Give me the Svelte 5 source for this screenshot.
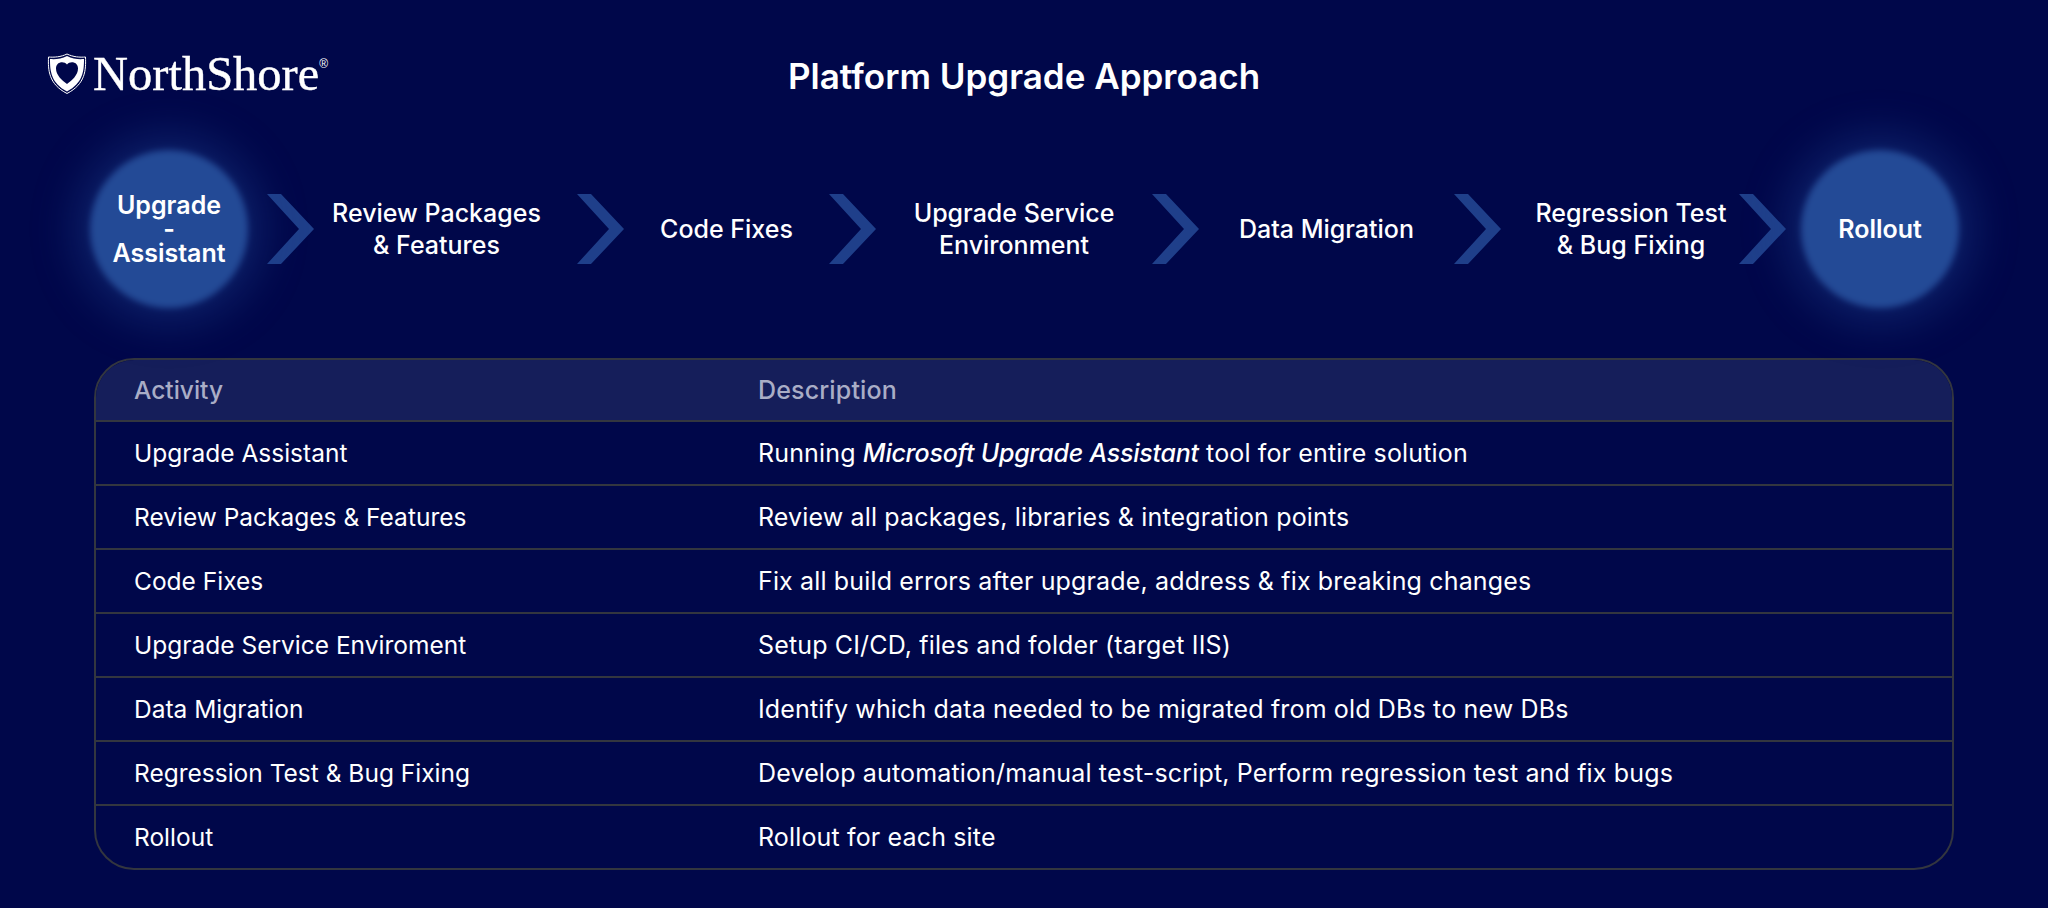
<script lang="ts">
  // width = room between the two chevrons, inset = space kept on the right of the text
  const steps = [
    { lines: ['Review Packages', '& Features'], width: 263, inset: 18, lead: 0 },
    { lines: ['Code Fixes'], width: 205, inset: 0, lead: 0 },
    { lines: ['Upgrade Service', 'Environment'], width: 276, inset: 0, lead: 0 },
    { lines: ['Data Migration'], width: 255, inset: 0, lead: 0 },
    { lines: ['Regression Test', '& Bug Fixing'], width: 238, inset: 0, lead: 22 }
  ];

  const rows = [
    { activity: 'Upgrade Assistant', before: 'Running ', em: 'Microsoft Upgrade Assistant', after: ' tool for entire solution' },
    { activity: 'Review Packages & Features', before: 'Review all packages, libraries & integration points' },
    { activity: 'Code Fixes', before: 'Fix all build errors after upgrade, address & fix breaking changes' },
    { activity: 'Upgrade Service Enviroment', before: 'Setup CI/CD, files and folder (target IIS)' },
    { activity: 'Data Migration', before: 'Identify which data needed to be migrated from old DBs to new DBs' },
    { activity: 'Regression Test & Bug Fixing', before: 'Develop automation/manual test-script, Perform regression test and fix bugs' },
    { activity: 'Rollout', before: 'Rollout for each site' }
  ];
</script>

{#snippet chevron()}
  <svg class="chevron" viewBox="0 0 47 70" aria-hidden="true">
    <path d="M0 0H14L47 35L14 70H0L32 35Z" />
  </svg>
{/snippet}

<div class="page">
  <header class="top">
    <div class="logo">
      <svg class="shield" viewBox="0 0 40 42" aria-hidden="true">
        <path class="shield-edge" d="M20 1C14 4 7 4.500 1.500 4C1 17 1.500 31 20 40.500C38.500 31 39 17 38.500 4C33 4.500 26 4 20 1Z" />
        <path fill-rule="evenodd" class="shield-fill" d="M20 3C14.500 6 8 6.500 3 6C3 18 4 30 20 38.500C36 30 37 18 37 6C32 6.500 25.500 6 20 3ZM20 11.500C23 7.500 31 8.500 31 15.500C31 22 25 27.500 20 31C15 27.500 9 22 9 15.500C9 8.500 17 7.500 20 11.500Z" />
      </svg>
      <span class="wordmark">NorthShore<sup>®</sup></span>
    </div>
    <h1>Platform Upgrade Approach</h1>
  </header>

  <section class="flow">
    <div class="circle"><span>Upgrade</span><span>-</span><span>Assistant</span></div>
    {@render chevron()}
    {#each steps as step}
      <div class="step" style="width: {step.width}px; padding: 0 {step.inset}px 0 {step.lead}px">
        {#each step.lines as line}<span>{line}</span>{/each}
      </div>
      {@render chevron()}
    {/each}
    <div class="circle end"><span>Rollout</span></div>
  </section>

  <section class="table">
    <div class="row head">
      <div class="col-a">Activity</div>
      <div class="col-b">Description</div>
    </div>
    {#each rows as row}
      <div class="row">
        <div class="col-a">{row.activity}</div>
        <div class="col-b">{row.before}{#if row.em}<em>{row.em}</em>{row.after}{/if}</div>
      </div>
    {/each}
  </section>
</div>

<style>
  :global(body) {
    background: #00074a;
  }

  .page {
    width: 2048px;
    height: 908px;
    overflow: hidden;
    background: #00074a;
    color: #fff;
    font-family: Inter, "Noto Sans", sans-serif;
  }

  .top {
    display: flex;
    align-items: center;
    height: 150px;
    padding: 0 0 0 47px;
    box-sizing: border-box;
  }

  .logo {
    display: flex;
    align-items: center;
    gap: 6px;
    width: 0;
    margin-top: -2px;
  }

  .shield {
    flex: none;
    width: 40px;
    height: 42px;
  }

  .shield-edge {
    fill: none;
    stroke: #fff;
    stroke-width: 1;
  }

  .shield-fill {
    fill: #fff;
  }

  .wordmark {
    font-family: "Liberation Serif", serif;
    font-size: 48.5px;
    line-height: 1;
    white-space: nowrap;
    -webkit-text-stroke: 0.4px #fff;
  }

  .wordmark sup {
    font-family: "Liberation Sans", sans-serif;
    font-size: 12px;
    font-weight: 400;
    vertical-align: 22px;
    line-height: 0;
    -webkit-text-stroke: 0;
  }

  h1 {
    flex: 1;
    margin: 2px 0 0 -47px;
    text-align: center;
    font-size: 35px;
    font-weight: 600;
    line-height: 1;
  }

  .flow {
    display: flex;
    align-items: center;
    height: 158px;
    padding-left: 90px;
    font-size: 25px;
    font-weight: 500;
    line-height: 32px;
  }

  .circle {
    position: relative;
    z-index: 0;
    flex: none;
    display: flex;
    flex-direction: column;
    align-items: center;
    justify-content: center;
    width: 158px;
    height: 158px;
    margin-right: 19px;
    font-weight: 600;
    line-height: 24px;
  }

  /* soft edge sits under the label */
  .circle::before {
    content: '';
    position: absolute;
    inset: 0;
    z-index: -1;
    border-radius: 50%;
    background: #234a96;
    filter: blur(3px);
    box-shadow: 0 0 46px 12px rgba(30, 70, 150, 0.45);
  }

  .circle.end {
    margin: 0 0 0 15px;
  }

  .chevron {
    flex: none;
    width: 47px;
    height: 70px;
    fill: #1f3f8a;
  }

  .step {
    flex: none;
    box-sizing: border-box;
    display: flex;
    flex-direction: column;
    align-items: center;
    white-space: nowrap;
    padding-top: 2px;
  }

  .table {
    box-sizing: border-box;
    width: 1860px;
    margin: 50px 0 0 94px;
    border: 2px solid #33363f;
    border-radius: 40px;
    overflow: hidden;
  }

  .row {
    display: flex;
    align-items: center;
    height: 64px;
    box-sizing: border-box;
    border-top: 2px solid #33363f;
    line-height: 30px;
  }

  .row.head {
    height: 60px;
    border-top: none;
    background: #151e5a;
    color: #a9adc6;
    font-weight: 500;
  }

  .col-a {
    width: 662px;
    padding-left: 38px;
    box-sizing: border-box;
    flex: none;
    font-size: 24.5px;
  }

  .col-b {
    font-size: 25px;
    letter-spacing: 0.15px;
  }

  em {
    font-style: italic;
    font-weight: 500;
    letter-spacing: -0.25px;
  }
</style>
